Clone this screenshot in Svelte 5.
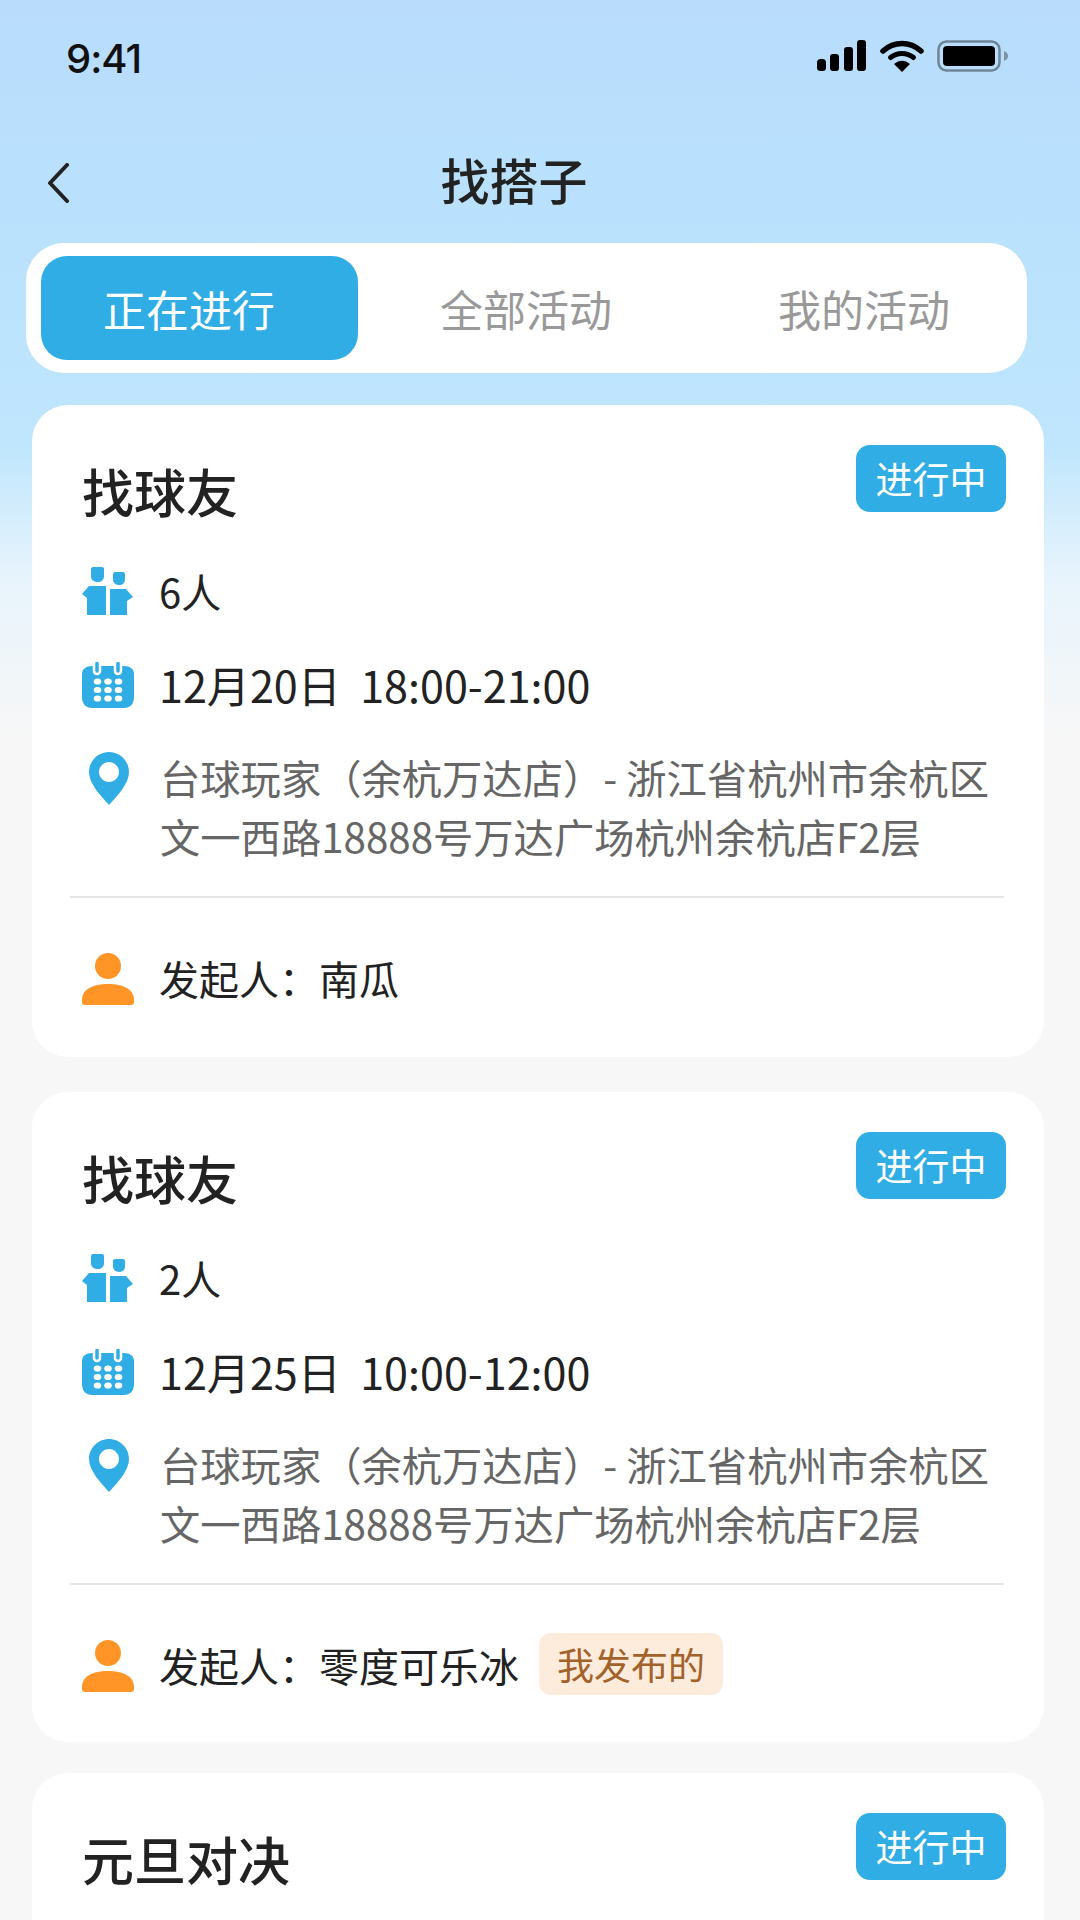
<script>
	const tabs = ['正在进行', '全部活动', '我的活动'];
	const address = ['台球玩家（余杭万达店）- 浙江省杭州市余杭区', '文一西路18888号万达广场杭州余杭店F2层'];
	// third card runs off the bottom of the screen, only its head is visible
	const cards = [
		{ title: '找球友', count: '6人', date: '12月20日  18:00-21:00', owner: '南瓜', mine: false },
		{ title: '找球友', count: '2人', date: '12月25日  10:00-12:00', owner: '零度可乐冰', mine: true },
		{ title: '元旦对决' }
	];
	const dots = [0, 1, 2].flatMap((r) => [0, 1, 2].map((c) => ({ x: 15.5 + c * 10.5, y: 19.5 + r * 8.5 })));
</script>

<div class="screen">
	<div class="status">
		<span class="time">9:41</span>
		<div class="status-icons">
			<svg width="50" height="32" viewBox="0 0 50 32">
				<rect x="0" y="19" width="9" height="12" rx="3.500" fill="#000" />
				<rect x="13" y="14" width="9" height="17" rx="3" fill="#000" />
				<rect x="27" y="7" width="9" height="24" rx="3" fill="#000" />
				<rect x="40" y="0" width="9" height="31" rx="3" fill="#000" />
			</svg>
			<svg width="44" height="32" viewBox="0 0 44 32">
				<path d="M3 11 C14 1 30 1 41 11" fill="none" stroke="#000" stroke-width="5.500" stroke-linecap="round" />
				<path d="M10.500 17.500 C17 12 27 12 33.500 17.500" fill="none" stroke="#000" stroke-width="5" stroke-linecap="round" />
				<path d="M14 24 C19 19.500 25 19.500 30 24 L22 32 Z" fill="#000" />
			</svg>
			<svg width="72" height="32" viewBox="0 0 72 32">
				<rect x="1.500" y="1.500" width="61" height="29" rx="8" fill="none" stroke="#6f8596" stroke-width="2.500" />
				<rect x="6" y="6" width="52" height="20" rx="4" fill="#000" />
				<path d="M67 11 C70 12 71 14 71 16 C71 18 70 20 67 21 Z" fill="#7d94a6" />
			</svg>
		</div>
	</div>

	<header class="nav">
		<svg class="back" width="24" height="40" viewBox="0 0 24 40">
			<path d="M21 2 L4 20 L21 38" fill="none" stroke="#222" stroke-width="4" stroke-linecap="round" stroke-linejoin="round" />
		</svg>
		<h1>找搭子</h1>
	</header>

	<nav class="tabs">
		{#each tabs as tab, i}
			<div class="tab" class:active={i === 0}>{tab}</div>
		{/each}
	</nav>

	<main class="list">
		{#each cards as card}
			<section class="card">
				<div class="card-head">
					<h2>{card.title}</h2>
					<span class="badge">进行中</span>
				</div>

				{#if card.owner}
					<div class="row count">
						<svg class="icon" width="52" height="49" viewBox="0 0 52 49">
							<path d="M11 0 H20 C21.500 0 22 1 22 2 V9 C22 13 19 15 16 15 C12 15 9 13 9 9 V2 C9 1 10 0 11 0 Z" fill="#31ade6" />
							<path d="M33 5 H41 C42 5 43 6 43 7 V12 C43 16 40.500 18 37.500 18 C34 18 31 16 31 12 V7 C31 6 32 5 33 5 Z" fill="#31ade6" />
							<path d="M7 19 H24 V48 H5 V31 L0 27 Z" fill="#31ade6" />
							<path d="M28 22 H44 L51 30 L45 34 V48 H28 Z" fill="#31ade6" />
						</svg>
						<span>{card.count}</span>
					</div>

					<div class="row date">
						<svg class="icon cal" width="52" height="46" viewBox="0 0 52 46">
							<path d="M10 4 H42 C48 4 52 7 52 12 V35 C52 42 48 46 42 46 H10 C4 46 0 42 0 35 V12 C0 7 4 4 10 4 Z" fill="#31ade6" />
							<path d="M15 4.500 V9 M36 4.500 V9" stroke="#fff" stroke-width="8.500" stroke-linecap="round" />
							<path d="M15 1.500 V9 M36 1.500 V9" stroke="#31ade6" stroke-width="3.500" stroke-linecap="round" />
							{#each dots as d}
								<ellipse cx={d.x} cy={d.y} rx="3.800" ry="3.100" fill="#fff" />
							{/each}
						</svg>
						<span>{card.date}</span>
					</div>

					<div class="row address">
						<svg class="icon pin" width="40" height="53" viewBox="0 0 40 53">
							<path fill-rule="evenodd" d="M20 0 C31 0 40 9 40 20 C40 32 28 44 20 53 C12 44 0 32 0 20 C0 9 9 0 20 0 Z M20 10 C14.500 10 10 14.500 10 20 C10 25.500 14.500 30 20 30 C25.500 30 30 25.500 30 20 C30 14.500 25.500 10 20 10 Z" fill="#31ade6" />
						</svg>
						<div>
							{#each address as line}
								<div>{line}</div>
							{/each}
						</div>
					</div>

					<div class="owner">
						<svg class="icon person" width="52" height="52" viewBox="0 0 52 52">
							<circle cx="26" cy="13" r="13" fill="#ff9527" />
							<path d="M0 47 C0 36 11 31 26 31 C41 31 52 36 52 47 V49 C52 51 51 52 49 52 H3 C1 52 0 51 0 49 Z" fill="#ff9527" />
						</svg>
						<span>发起人：{card.owner}</span>
						{#if card.mine}
							<span class="mine">我发布的</span>
						{/if}
					</div>
				{/if}
			</section>
		{/each}
	</main>
</div>

<style>
	:global(body) {
		margin: 0;
	}
	.screen {
		width: 1080px;
		height: 1920px;
		overflow: hidden;
		background: linear-gradient(180deg, #b9dcfc 0, #b9e1fd 200px, #bfe6fd 445px, #e8f4fc 580px, #f7f7f7 740px);
		font-family: "Noto Sans CJK SC", "Noto Sans", sans-serif;
		color: #222;
	}
	.status {
		display: flex;
		justify-content: space-between;
		align-items: center;
		height: 32px;
		padding: 40px 71px 0 66px;
	}
	.time {
		position: relative;
		top: 2px;
		font-family: Inter, "Liberation Sans", sans-serif;
		font-size: 40px;
		font-weight: 500;
		color: #111;
		letter-spacing: -1px;
	}
	.status-icons {
		display: flex;
		align-items: center;
		gap: 13px;
	}
	.nav {
		position: relative;
		height: 70px;
		margin-top: 71px;
		display: flex;
		align-items: center;
		justify-content: center;
		padding-right: 52px;
		margin-bottom: 30px;
	}
	.back {
		position: absolute;
		left: 46px;
		top: 20px;
	}
	h1 {
		margin: 0;
		font-size: 49px;
		font-weight: 500;
	}
	.tabs {
		display: flex;
		margin: 0 53px 0 26px;
		padding: 13px 15px;
		height: 104px;
		background: #fff;
		border-radius: 38px;
	}
	.tab {
		flex: none;
		width: 338px;
		display: flex;
		align-items: center;
		justify-content: center;
		border-radius: 26px;
		font-size: 43px;
		color: #999;
	}
	.tab.active {
		box-sizing: border-box;
		width: 317px;
		padding-right: 21px;
		margin-right: -1px;
		background: #31ade6;
		color: #fff;
	}
	.list {
		display: flex;
		flex-direction: column;
		gap: 31px;
		margin: 32px 36px 0 32px;
	}
	.card {
		box-sizing: border-box;
		height: 650px;
		flex: none;
		padding: 40px 38px 0 38px;
		background: #fff;
		border-radius: 36px;
	}
	.card:first-child {
		height: 652px;
		margin-bottom: 4px;
	}
	.card-head {
		display: flex;
		justify-content: space-between;
		align-items: flex-start;
		height: 96px;
	}
	h2 {
		margin: -2px 0 0 12px;
		font-size: 52px;
		font-weight: 500;
		line-height: 96px;
	}
	.badge {
		width: 150px;
		height: 67px;
		line-height: 67px;
		text-align: center;
		background: #31ade6;
		color: #fff;
		border-radius: 14px;
		font-size: 37px;
	}
	.row {
		display: flex;
		align-items: center;
		font-size: 40px;
		white-space: pre;
	}
	.count {
		height: 60px;
		margin-top: 20px;
	}
	.date {
		height: 60px;
		margin-top: 33px;
		font-size: 43.1px;
	}
	.address {
		align-items: flex-start;
		margin-top: 33px;
		line-height: 59px;
		font-size: 40.3px;
		color: #666;
	}
	.icon {
		flex: none;
		margin-left: 12px;
		margin-right: 25px;
	}
	.cal {
		margin-top: 2px;
	}
	.pin {
		margin: 5px 31px 0 19px;
	}
	.person {
		margin-top: 2px;
	}
	.owner {
		display: flex;
		align-items: center;
		margin: 31px 2px 0 0;
		padding-top: 42px;
		height: 76px;
		border-top: 2px solid #e5e5e5;
		font-size: 40px;
	}
	.mine {
		margin-left: 20px;
		padding: 0 18px;
		height: 62px;
		line-height: 62px;
		margin-bottom: 2px;
		background: #fdebdc;
		color: #a3622a;
		border-radius: 12px;
		font-size: 37px;
	}
</style>
